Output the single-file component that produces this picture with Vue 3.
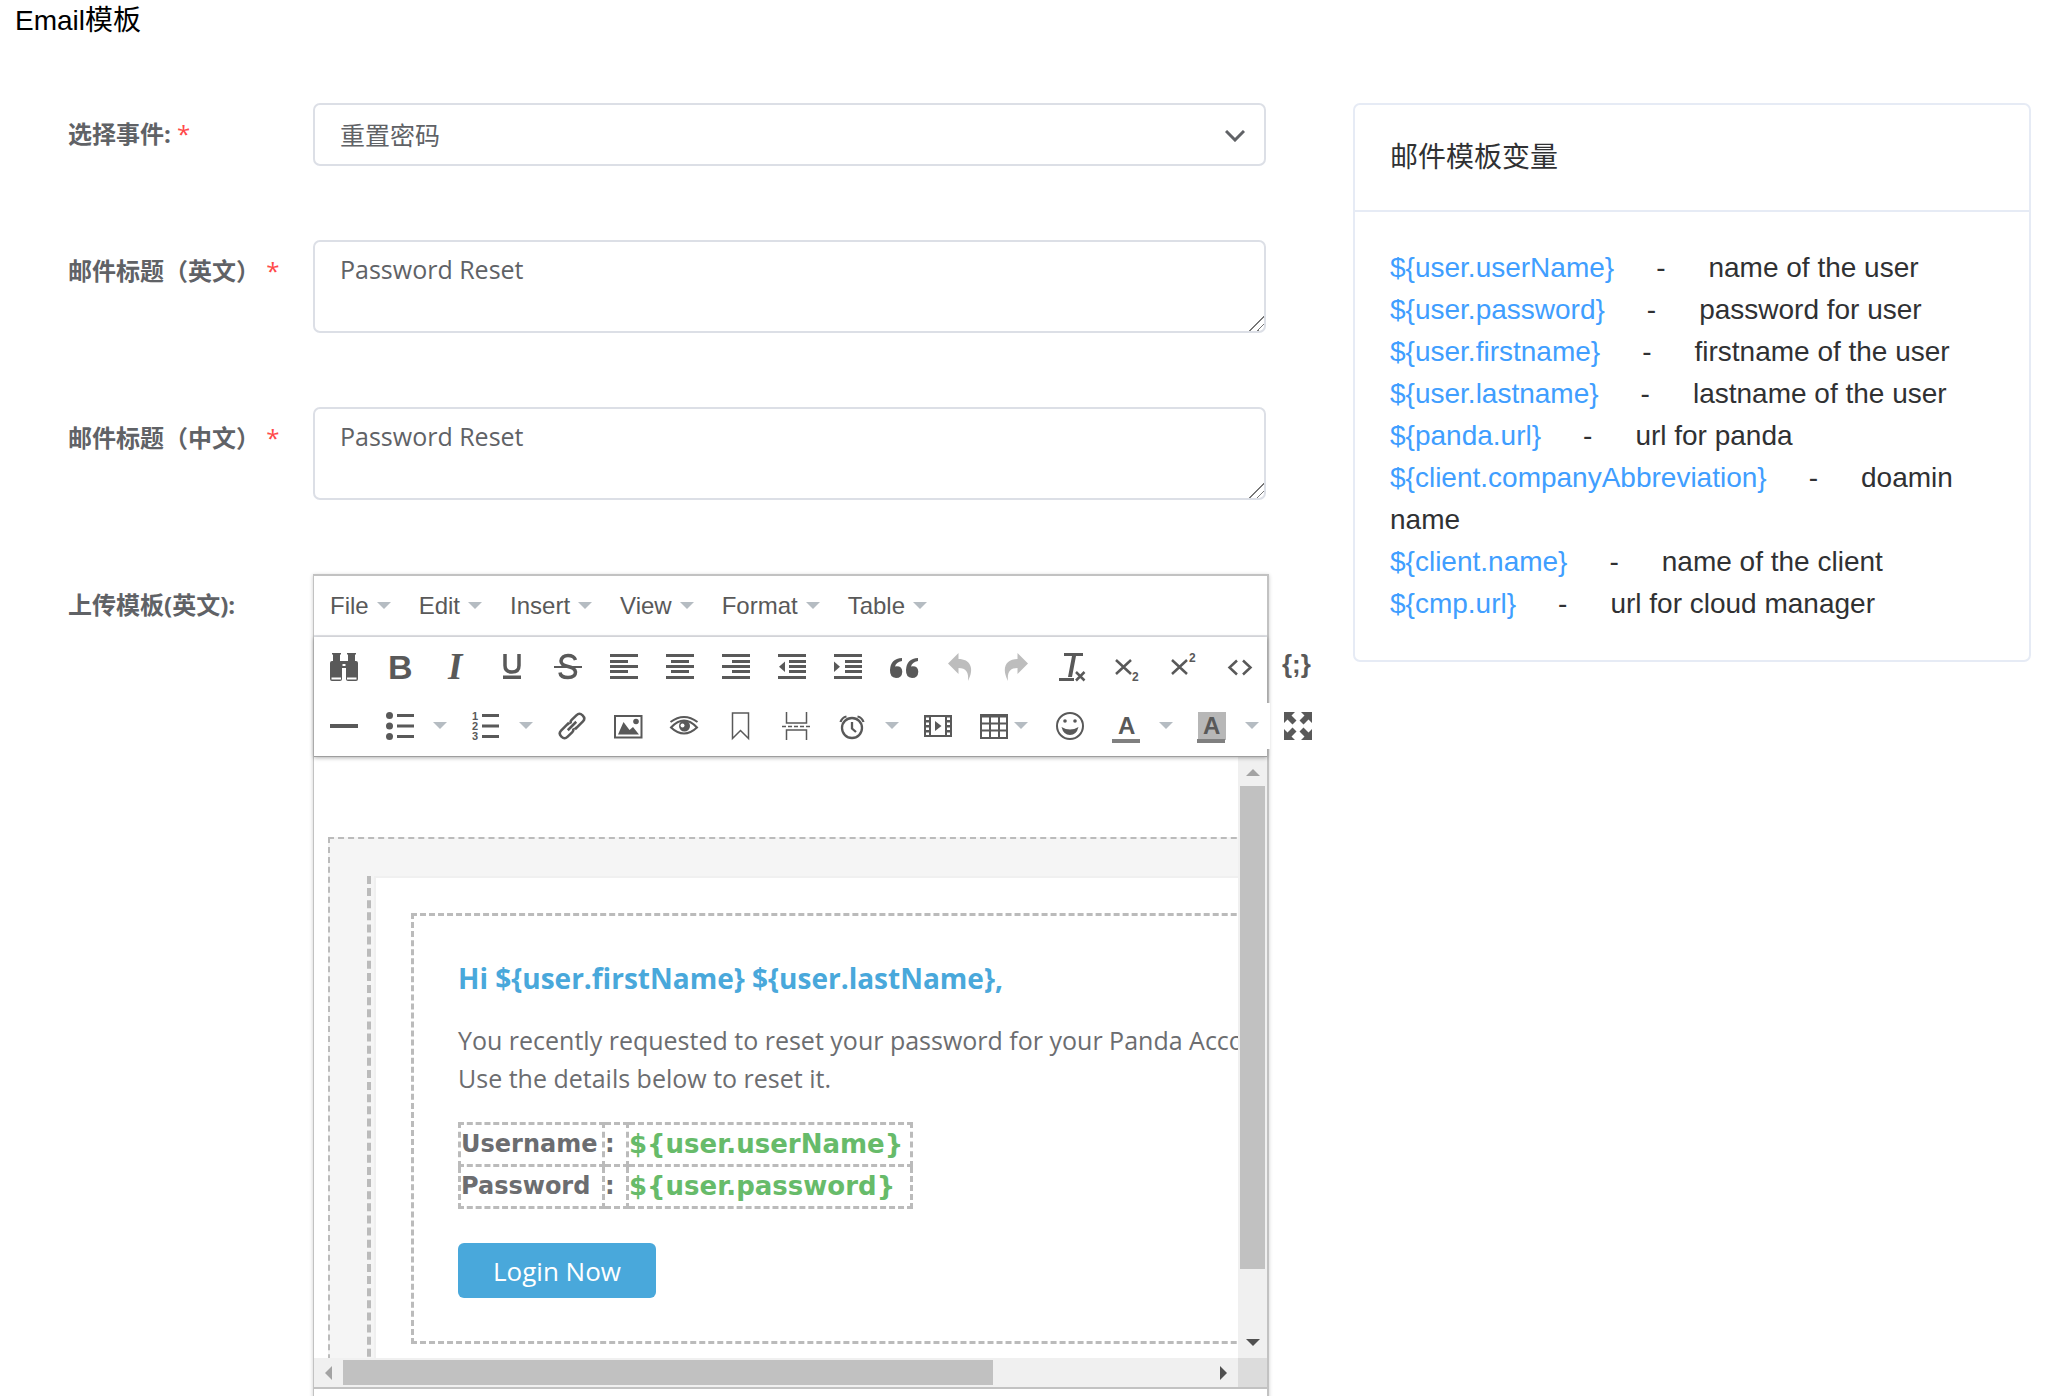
<script setup>
import { ref } from 'vue'

const event = ref('reset')
const titleEn = ref('Password Reset')
const titleZh = ref('Password Reset')

const variables = [
  { name: '${user.userName}', text: 'name of the user' },
  { name: '${user.password}', text: 'password for user' },
  { name: '${user.firstname}', text: 'firstname of the user' },
  { name: '${user.lastname}', text: 'lastname of the user' },
  { name: '${panda.url}', text: 'url for panda' },
  { name: '${client.companyAbbreviation}', text: 'doamin name' },
  { name: '${client.name}', text: 'name of the client' },
  { name: '${cmp.url}', text: 'url for cloud manager' },
]

const credentials = [
  { key: 'Username', value: '${user.userName}' },
  { key: 'Password', value: '${user.password}' },
]

const greeting = 'Hi ${user.firstName} ${user.lastName},'

const menus = ['File', 'Edit', 'Insert', 'View', 'Format', 'Table']

const bars = (rows) =>
  rows.map(([x, w], i) => `<rect x="${x}" y="${[1, 7, 12, 17, 23][i]}" width="${w}" height="3"/>`).join('')

const sans = 'font-family="Liberation Sans, sans-serif"'

const rowOne = [
  {
    label: 'Find and replace',
    art: '<path d="M2 0h9v1l-1 1v6h8V2l-1-1V0h9v1l-1 1v6h1q2 0 2 2v16q0 2-2 2h-8q-2 0-2-2V15h-4v11q0 2-2 2H2q-2 0-2-2V10q0-2 2-2h1V2L2 1z"/><path d="M1.500 24.500h9.500v2h-9.500zM17 24.500h9.500v2H17zM12.500 11h3v2h-3z" fill="#fff"/>',
  },
  { label: 'Bold', art: `<text x="2" y="26" font-size="34" font-weight="700" ${sans}>B</text>` },
  { label: 'Italic', art: '<text x="6" y="26" font-size="37" font-weight="700" font-style="italic" font-family="Liberation Serif, serif">I</text>' },
  { label: 'Underline', art: '<path d="M7 1v11.500q0 6.500 7 6.500t7-6.500V1" fill="none" stroke="#595959" stroke-width="3.500"/><rect x="5" y="22.500" width="18" height="3.500"/>' },
  { label: 'Strikethrough', art: '<path d="M21.500 7Q20 2.500 14 2.500T7 8q0 4 7 5.500T21.500 19q0 5.500-7.500 5.500T6 19.500" fill="none" stroke="#595959" stroke-width="3.500"/><rect y="13" width="28" height="2"/>' },
  { label: 'Align left', art: bars([[0, 28], [0, 18], [0, 28], [0, 18], [0, 28]]) },
  { label: 'Align center', art: bars([[0, 28], [5, 18], [0, 28], [5, 18], [0, 28]]) },
  { label: 'Align right', art: bars([[0, 28], [10, 18], [0, 28], [10, 18], [0, 28]]) },
  { label: 'Decrease indent', art: bars([[0, 28], [11, 17], [11, 17], [11, 17], [0, 28]]) + '<path d="M7 8.500v10.500L1 13.800z"/>' },
  { label: 'Increase indent', art: bars([[0, 28], [11, 17], [11, 17], [11, 17], [0, 28]]) + '<path d="M0 8.500v10.500l6-5.200z"/>' },
  {
    label: 'Blockquote',
    art: '<path d="M12 5v3q-6 1-7 5.500 7-1 7.300 5.200Q12 25 6 25-.3 24.500 0 17 .5 5.500 12 5zM28 5v3q-6 1-7 5.500 7-1 7.300 5.200Q28 25 22 25q-6.300-.5-6-8Q16.500 5.500 28 5z"/>',
  },
  { label: 'Undo', art: '<path fill="#bdbdbd" d="M2 10.500 12.500 0v6C24 6 29 15 22 28c1-9-2-13-9.500-13v6z"/>' },
  { label: 'Redo', art: '<path fill="#bdbdbd" d="M26 10.500 15.500 0v6C4 6-1 15 6 28c-1-9 2-13 9.500-13v6z"/>' },
  { label: 'Clear formatting', art: '<path d="M6 0h19v3H6zM14 3h4l-4 21h-4zM1 25h15v3H1z"/><path d="m18 19 8.500 8.500m0-8.500L18 27.500" stroke="#595959" stroke-width="2.500"/>' },
  { label: 'Subscript', art: `<path d="m2 7 15 14M17 7 2 21" stroke="#595959" stroke-width="2.500"/><text x="18" y="28" font-size="12" font-weight="700" ${sans}>2</text>` },
  { label: 'Superscript', art: `<path d="m2 7 15 14M17 7 2 21" stroke="#595959" stroke-width="2.500"/><text x="19" y="9" font-size="12" font-weight="700" ${sans}>2</text>` },
  { label: 'Source code', art: '<path d="m11 7.500-7.500 7 7.500 7m6-14 7.500 7-7.500 7" fill="none" stroke="#595959" stroke-width="2.500"/>' },
  { label: 'Code sample', art: `<text x="0" y="20" font-size="26" font-weight="700" ${sans}>{;}</text>` },
]

const listLines = '<path d="M11 2h17v3H11zM11 12.500h17v3H11zM11 23h17v3H11z"/>'

const rowTwo = [
  { label: 'Horizontal line', art: '<rect y="12" width="28" height="4"/>' },
  { label: 'Bullet list', split: true, art: '<circle cx="3.500" cy="3.500" r="3.500"/><circle cx="3.500" cy="14" r="3.500"/><circle cx="3.500" cy="24.500" r="3.500"/>' + listLines },
  { label: 'Numbered list', split: true, art: `<g font-size="11" font-weight="700" ${sans}><text y="8">1</text><text y="18">2</text><text y="28">3</text></g><path d="M10 2h17v3H10zM10 12.500h17v3H10zM10 23h17v3H10z"/>` },
  { label: 'Insert link', art: '<g transform="rotate(-45 14 14)" fill="none" stroke="#595959" stroke-width="2.500"><path d="M13 11V9.500H3Q-1 9.500-1 14t4 4.500h7q2.500 0 3-2M15 17v1.500h10q4 0 4-4.500t-4-4.500h-7q-2.500 0-3 2"/><path d="M8 14h12"/></g>' },
  { label: 'Insert image', art: '<rect x="1" y="4" width="26.500" height="21.500" fill="none" stroke="#595959" stroke-width="2"/><circle cx="22" cy="9.500" r="2.800"/><path d="M4 22.500 9.500 10l6 8 3.500-3 6 7.500z"/>' },
  { label: 'Preview', art: '<path d="M1 15.500q13-14 26 0-13 12-26 0z" fill="none" stroke="#595959" stroke-width="2"/><path d="M.5 10q13.500-10 27 0" fill="none" stroke="#595959" stroke-width="2"/><circle cx="14.500" cy="14" r="5.500"/><circle cx="12.500" cy="13.500" r="2" fill="#fff"/>' },
  { label: 'Anchor', art: '<path d="M6.500 1h16v25.500l-8-8-8 8z" fill="none" stroke="#595959" stroke-width="1.500"/>' },
  { label: 'Page break', art: '<path d="M4.500 0v11h20V0M4.500 28V18h20v10" fill="none" stroke="#595959" stroke-width="1.500"/><path d="M0 14.500h28" stroke="#595959" stroke-width="1.500" stroke-dasharray="4 2"/>' },
  { label: 'Insert date/time', split: true, art: '<g fill="none" stroke="#595959" stroke-width="2.300"><circle cx="14" cy="16" r="10"/><path d="M14 10v6.500l4 3.500M2.500 10Q4 5.500 8.500 4.500M25.500 10Q24 5.500 19.500 4.500"/></g>' },
  { label: 'Insert media', art: '<path d="M0 3h28v22H0zM7 5v18h14V5zM2 5.500V8h3V5.500zm0 5V13h3v-2.500zm0 5V18h3v-2.500zm0 5V23h3v-2.500zM23 5.500V8h3V5.500zm0 5V13h3v-2.500zm0 5V18h3v-2.500zm0 5V23h3v-2.500z" fill-rule="evenodd"/><path d="M11 9v10l6.500-5z"/>' },
  { label: 'Table', menu: true, art: '<path d="M0 2h28v25H0zM2 5.500v5h7v-5zm9 0v5h7v-5zm9 0v5h6v-5zM2 12.500v5h7v-5zm9 0v5h7v-5zm9 0v5h6v-5zM2 19.500V25h7v-5.500zm9 0V25h7v-5.500zm9 0V25h6v-5.500z" fill-rule="evenodd"/>' },
  { label: 'Emoticons', art: '<circle cx="14" cy="14" r="13" fill="none" stroke="#595959" stroke-width="2"/><circle cx="9" cy="9" r="1.800"/><circle cx="19" cy="9" r="1.800"/><path d="M5.500 15q8.500 5 17 0-2 8-8.500 8t-8.500-8z"/>' },
  { label: 'Text color', split: true, art: `<text x="6" y="22" font-size="24" font-weight="700" ${sans}>A</text><rect y="27" width="28" height="4" fill="#808080"/>` },
  { label: 'Background color', split: true, art: `<rect width="28" height="28" fill="#b7b7b7"/><text x="5" y="22" font-size="24" font-weight="700" ${sans}>A</text><rect x="-1" y="27" width="28" height="4" fill="#808080"/>` },
  { label: 'Fullscreen', art: '<path d="M0 0h11L7.500 3.500l5 5-4 4-5-5L0 11zM28 0v11l-3.500-3.500-5 5-4-4 5-5L17 0zM0 28V17l3.500 3.500 5-5 4 4-5 5L11 28zM28 28H17l3.500-3.500-5-5 4-4 5 5L28 17z"/>' },
]

const toolbar = [rowOne, rowTwo]
</script>

<template>
  <div class="page">
    <h1 class="page-title">Email模板</h1>
    <main class="layout">
      <form class="form" @submit.prevent>
        <div class="row">
          <label class="label" for="event">选择事件: <span class="star">*</span></label>
          <div class="select-wrap">
            <select id="event" v-model="event" class="control select">
              <option value="reset">重置密码</option>
            </select>
            <svg class="chevron" viewBox="0 0 20 12" aria-hidden="true">
              <path d="m1 1 9 9 9-9" fill="none" stroke="#606266" stroke-width="3" />
            </svg>
          </div>
        </div>
        <div class="row">
          <label class="label" for="title-en">邮件标题（英文） <span class="star">*</span></label>
          <textarea id="title-en" v-model="titleEn" class="control area"></textarea>
        </div>
        <div class="row">
          <label class="label" for="title-zh">邮件标题（中文） <span class="star">*</span></label>
          <textarea id="title-zh" v-model="titleZh" class="control area"></textarea>
        </div>
        <div class="row">
          <span class="label">上传模板(英文):</span>
          <div class="editor">
            <div class="menubar">
              <button v-for="menu in menus" :key="menu" type="button" class="menu">
                {{ menu }}<i class="caret"></i>
              </button>
            </div>
            <div class="toolbar">
              <div v-for="(tools, index) in toolbar" :key="index" class="tools">
                <button
                  v-for="tool in tools"
                  :key="tool.label"
                  type="button"
                  class="tool"
                  :class="{ split: tool.split, drop: tool.menu }"
                  :aria-label="tool.label"
                >
                  <svg class="icon" viewBox="0 0 28 28" aria-hidden="true" v-html="tool.art"></svg>
                  <i v-if="tool.split || tool.menu" class="caret"></i>
                </button>
              </div>
            </div>
            <div class="edit-area">
              <div class="viewport">
                <div class="mail">
                  <div class="mail-cell">
                    <div class="mail-card">
                      <div class="mail-body">
                        <h2 class="mail-title">{{ greeting }}</h2>
                        <p class="mail-text">
                          You recently requested to reset your password for your Panda Account.<br />
                          Use the details below to reset it.
                        </p>
                        <table class="credentials">
                          <tbody>
                            <tr v-for="item in credentials" :key="item.key">
                              <td class="key">{{ item.key }}</td>
                              <td class="colon">:</td>
                              <td class="value">{{ item.value }}</td>
                            </tr>
                          </tbody>
                        </table>
                        <button type="button" class="login">Login Now</button>
                      </div>
                    </div>
                  </div>
                </div>
              </div>
              <div class="scroll vertical">
                <i class="arrow up"></i>
                <div class="track"><div class="thumb"></div></div>
                <i class="arrow down"></i>
              </div>
              <div class="scroll horizontal">
                <i class="arrow left"></i>
                <div class="track"><div class="thumb"></div></div>
                <i class="arrow right"></i>
              </div>
              <div class="corner"></div>
            </div>
            <div class="statusbar"></div>
          </div>
        </div>
      </form>

      <aside class="card">
        <h2 class="card-title">邮件模板变量</h2>
        <ul class="variables">
          <li v-for="item in variables" :key="item.name">
            <a href="#" class="variable">{{ item.name }}</a><span class="dash">-</span>{{ item.text }}
          </li>
        </ul>
      </aside>
    </main>
  </div>
</template>

<style>
body {
  margin: 0;
  background: #fff;
}
</style>

<style scoped>
.page {
  height: 100vh;
  overflow: hidden;
  font-family: "Liberation Sans", "Noto Sans CJK SC", sans-serif;
  color: #303133;
}
.page *,
.page {
  box-sizing: border-box;
}
.page-title {
  margin: 0 0 61px 15px;
  font-size: 28px;
  font-weight: 400;
  line-height: 42px;
  color: #000;
}
.layout {
  display: grid;
  grid-template-columns: minmax(0, 1198fr) minmax(0, 678fr);
  column-gap: 87px;
  align-items: start;
  padding: 0 26px 0 68px;
}
.form {
  display: flex;
  flex-direction: column;
  gap: 74px;
  font-family: "Open Sans", "Noto Sans CJK SC", sans-serif;
  font-size: 25px;
  color: #606266;
}
.row {
  display: grid;
  grid-template-columns: 245px minmax(0, 1fr);
  align-items: start;
}
.label {
  font-size: 24px;
  font-weight: 700;
  line-height: 61px;
  white-space: nowrap;
}
.star {
  font-weight: 400;
  color: #ff4949;
}
.select-wrap {
  position: relative;
}
.control {
  display: block;
  width: 100%;
  border: 2px solid #dcdfe6;
  border-radius: 7px;
  background: #fff;
  font: inherit;
  color: #606266;
}
.select {
  height: 63px;
  padding: 0 25px;
  appearance: none;
}
.chevron {
  position: absolute;
  right: 21px;
  top: 27px;
  width: 20px;
  height: 12px;
}
.area {
  height: 93px;
  padding: 9px 25px;
  line-height: 36px;
  resize: vertical;
}
.area::-webkit-resizer {
  background: linear-gradient(
    135deg,
    transparent 48%,
    #777 48%,
    #777 54%,
    transparent 54%,
    transparent 74%,
    #777 74%,
    #777 80%,
    transparent 80%
  );
}
.editor {
  box-sizing: content-box;
  width: 100%;
  border: 2px solid #c2c2c2;
  border-left-width: 1px;
  box-shadow: 0 1px 4px rgba(0, 0, 0, 0.2);
  font-family: "Liberation Sans", sans-serif;
}
.menubar {
  display: flex;
  padding: 0 2px;
  border-bottom: 2px solid #e2e4e8;
}
.menu {
  display: flex;
  align-items: center;
  gap: 8px;
  height: 59px;
  padding: 0 14px;
  border: 0;
  background: none;
  font-family: inherit;
  font-size: 24px;
  color: #595959;
}
.caret {
  flex: none;
  border: 7px solid transparent;
  border-top-color: #b5bcc2;
  border-bottom: 0;
}
.toolbar {
  position: relative;
  padding: 0 2px 1px;
  border-bottom: 1px solid #9e9e9e;
  box-shadow: 0 1px 4px rgba(0, 0, 0, 0.3);
}
.tools {
  display: flex;
  height: 59px;
  align-items: center;
}
.tool {
  flex: none;
  display: flex;
  align-items: center;
  width: 56px;
  height: 46px;
  padding: 0 14px;
  border: 0;
  background: none;
}
.split {
  width: 86px;
  gap: 19px;
  background: #fff;
}
.drop {
  width: 76px;
  gap: 6px;
}
.icon {
  flex: none;
  width: 28px;
  height: 28px;
  overflow: visible;
  fill: #595959;
}
.edit-area {
  display: grid;
  grid-template-columns: minmax(0, 1fr) 29px;
  grid-template-rows: 601px 29px;
  border-bottom: 2px solid #c2c2c2;
}
.viewport {
  overflow: hidden;
  padding: 80px 0 0 14px;
}
.mail {
  width: 1300px;
  padding: 37px;
  border: 2px dashed #bbb;
  background: #f5f5f5;
  font-family: "Open Sans", sans-serif;
  color: #6c6d70;
}
.mail-cell {
  padding-left: 3px;
  border-left: 4px dashed #bbb;
}
.mail-card {
  padding: 35px;
  border: 2px solid #f0f0f0;
  background: #fff;
}
.mail-body {
  padding: 43px 44px;
  border: 3px dashed #bbb;
}
.mail-title {
  margin: 0 0 24px;
  font-size: 28px;
  line-height: 38px;
  color: #49a8db;
}
.mail-text {
  margin: 0 0 25px;
  font-size: 25px;
  line-height: 38px;
  white-space: nowrap;
}
.credentials {
  border-collapse: collapse;
  margin-bottom: 34px;
  font-family: "DejaVu Sans", sans-serif;
  font-size: 24px;
  font-weight: 700;
  line-height: 39px;
}
.credentials td {
  padding: 0;
  border: 3px dashed #bbb;
}
.key {
  width: 144px;
}
.colon {
  width: 24px;
}
.credentials .value {
  width: 284px;
  font-size: 26px;
  color: #67bb6a;
}
.login {
  display: block;
  height: 55px;
  padding: 0 35px;
  border: 0;
  border-radius: 6px;
  background: #49a8db;
  font-family: inherit;
  font-size: 26px;
  color: #fff;
}
.scroll {
  display: flex;
  align-items: center;
  background: #f0f0f0;
}
.vertical {
  flex-direction: column;
  padding: 12px 0;
}
.horizontal {
  padding: 0 11px;
}
.track {
  flex: 1;
}
.vertical .track {
  width: 25px;
  padding: 10px 0;
}
.vertical .thumb {
  height: 89%;
}
.horizontal .track {
  padding: 0 11px;
}
.horizontal .thumb {
  width: 75%;
  height: 25px;
}
.thumb {
  background: #c1c1c1;
}
.arrow {
  border: 7px solid transparent;
}
.up {
  border-top: 0;
  border-bottom-color: #a3a3a3;
}
.down {
  border-bottom: 0;
  border-top-color: #505050;
}
.left {
  border-left: 0;
  border-right-color: #a3a3a3;
}
.right {
  border-right: 0;
  border-left-color: #505050;
}
.corner {
  background: #dcdcdc;
}
.statusbar {
  height: 40px;
}
.card {
  border: 2px solid #e6ebf5;
  border-radius: 7px;
  font-size: 28px;
}
.card-title {
  margin: 0;
  padding: 35px;
  border-bottom: 2px solid #e6ebf5;
  font-size: 28px;
  font-weight: 400;
  line-height: 35px;
}
.variables {
  margin: 0;
  padding: 35px;
  list-style: none;
  line-height: 42px;
}
.variable {
  color: #409eff;
  text-decoration: none;
}
.dash {
  margin: 0 43px 0 42px;
}
</style>
